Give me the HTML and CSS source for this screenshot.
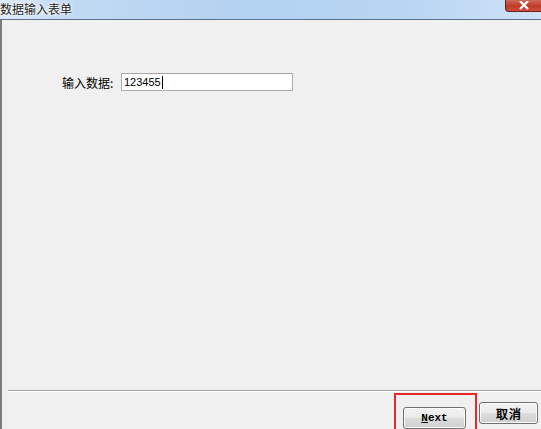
FILE: index.html
```html
<!DOCTYPE html>
<html lang="zh-CN">
<head>
    <meta charset="UTF-8">
    <title>数据输入表单</title>
    <link rel="stylesheet" href="styles.css">
</head>
<body>
    <div class="window">
        <div class="titlebar">
            <span class="title">数据输入表单</span>
            <button class="close-btn" type="button">
                <svg width="12" height="10" viewBox="0 0 12 10"><path d="M2 0 L10 8 M10 0 L2 8" stroke="#fff" stroke-width="2.2"/></svg>
            </button>
        </div>

        <div class="client">
            <div class="form-row">
                <label class="field-label" for="data">输入数据:</label>
                <div class="field-box">
                    <span class="field-text">123455</span><span class="caret"></span>
                </div>
            </div>

            <div class="spacer"></div>

            <div class="separator"></div>

            <div class="footer">
                <div class="highlight">
                    <button class="btn btn-next" type="button"><u>N</u>ext</button>
                </div>
                <button class="btn btn-cancel" type="button">取消</button>
            </div>
        </div>
    </div>
</body>
</html>
```

FILE: styles.css
```css
* {
    margin: 0;
    padding: 0;
    box-sizing: border-box;
}

body {
    width: 541px;
    height: 429px;
    overflow: hidden;
    background-color: #f0f0f0;
    font-family: "Noto Sans CJK SC", "Liberation Sans", sans-serif;
}

.window {
    display: flex;
    flex-direction: column;
    height: 429px;
}

/* Title bar */
.titlebar {
    height: 20px;
    display: flex;
    justify-content: space-between;
    align-items: flex-start;
    background: linear-gradient(to right, #dce9f7 0%, #c2daf3 12%, #b3d1f1 45%, #b8d5f3 75%, #cfe2f6 100%);
    border-bottom: 1px solid #5d7189;
}

.title {
    font-size: 12px;
    line-height: 18px;
    color: #222;
    text-shadow: 0 0 5px #fff, 0 0 3px #fff, 0 0 1px #fff;
}

.close-btn {
    width: 36px;
    height: 12px;
    border: 1px solid #6e2118;
    border-top: none;
    border-right: none;
    border-radius: 0 0 0 4px;
    background: linear-gradient(to bottom, #cf6a5c 0%, #c13a28 55%, #d0513f 100%);
    display: flex;
    justify-content: center;
    align-items: flex-end;
    overflow: hidden;
}

.close-btn svg {
    display: block;
}

/* Client area */
.client {
    flex: 1;
    display: flex;
    flex-direction: column;
    border-left: 2px solid #7c7c7c;
    background-color: #f0f0f0;
}

.form-row {
    display: flex;
    align-items: center;
    margin-top: 53px;
    padding-left: 60px;
}

.field-label {
    font-size: 12px;
    color: #000;
    width: 59px;
}

.field-box {
    width: 172px;
    height: 18px;
    background-color: #fff;
    border: 1px solid #abadb3;
    border-top-color: #a3a5aa;
    display: flex;
    align-items: center;
    padding-left: 2px;
}

.field-text {
    font-family: "Liberation Sans", sans-serif;
    font-size: 11px;
    color: #000;
}

.caret {
    width: 1px;
    height: 13px;
    background-color: #000;
    margin-left: 1px;
}

.spacer {
    flex: 1;
}

.separator {
    margin-left: 6px;
    height: 2px;
    border-top: 1px solid #a0a0a0;
    border-bottom: 1px solid #fff;
}

/* Footer buttons */
.footer {
    height: 37px;
    display: flex;
    justify-content: flex-end;
    align-items: flex-start;
    padding-top: 1px;
    padding-right: 3px;
    overflow: hidden;
}

.highlight {
    border: 2px solid #e9282c;
    border-bottom: none;
    padding: 7px 9px 7px 7px;
    height: 40px;
    margin-right: 2px;
}

.btn {
    height: 22px;
    border: 1px solid #707070;
    border-radius: 3px;
    background: linear-gradient(to bottom, #f2f2f2 0%, #ebebeb 48%, #dddddd 52%, #cfcfcf 100%);
    color: #000;
    box-shadow: inset 0 0 0 1px #fcfcfc;
}

.btn-next {
    width: 63px;
    font-family: "Liberation Mono", monospace;
    font-size: 11px;
    font-weight: bold;
}

.btn-cancel {
    width: 59px;
    margin-top: 9px;
    font-size: 12px;
    font-weight: bold;
    letter-spacing: 1px;
}
```
